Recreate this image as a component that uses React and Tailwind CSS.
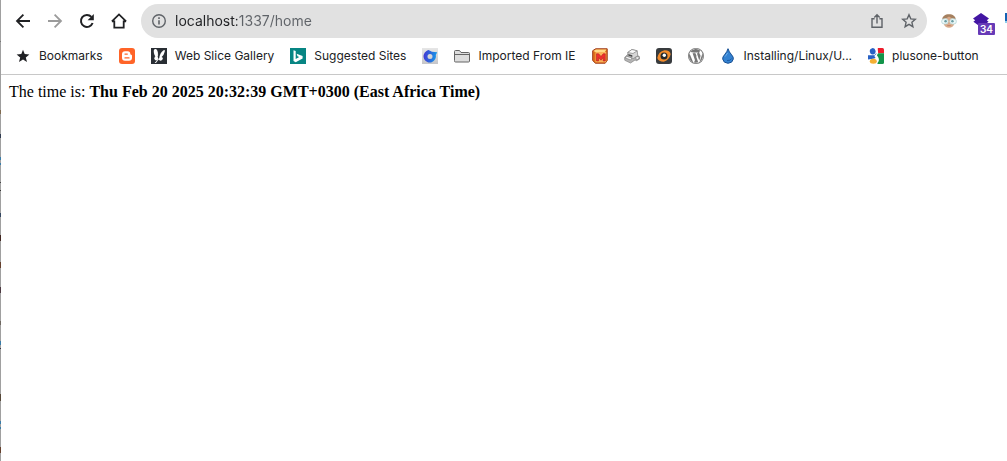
import React from "react";

const BackIcon = ({ className }) => (
  <svg viewBox="0 0 16 16" className={className} fill="none" stroke="currentColor" strokeWidth="1.8">
    <path d="M15 8H2.4M8.4 1.6 2 8l6.4 6.4" />
  </svg>
);

const ForwardIcon = ({ className }) => (
  <svg viewBox="0 0 16 16" className={className} fill="none" stroke="currentColor" strokeWidth="1.8">
    <path d="M1 8h12.6M7.6 1.6 14 8l-6.4 6.4" />
  </svg>
);

const ReloadIcon = ({ className }) => (
  <svg viewBox="0 0 16 16" className={className} fill="none" stroke="currentColor" strokeWidth="2">
    <path d="M13.6 10A6 6 0 1 1 12.4 3.9" />
    <path d="M14.8 1v6.2H8.6z" fill="currentColor" stroke="none" />
  </svg>
);

const HomeIcon = ({ className }) => (
  <svg viewBox="0 0 16 16" className={className} fill="none" stroke="currentColor" strokeWidth="1.8">
    <path d="M.9 8.3 8 1.4l7.1 6.9M.9 8.3h2.400v6.4h9.4V8.3h2.400" />
  </svg>
);

const InfoIcon = () => (
  <svg viewBox="0 0 16 16" className="size-4" fill="none" stroke="currentColor" strokeWidth="1.4">
    <circle cx="8" cy="8" r="6.3" />
    <path d="M8 7.2v4.2M8 4.3v1.6" strokeWidth="1.6" />
  </svg>
);

const ShareIcon = () => (
  <svg viewBox="0 0 16 16" className="size-4" fill="none" stroke="currentColor" strokeWidth="1.4">
    <path d="M5.6 5.7H3v8.6h10V5.7h-2.6M8 10.4V2M5.3 4.5 8 1.8l2.7 2.7" />
  </svg>
);

const StarOutlineIcon = () => (
  <svg viewBox="0 0 16 16" className="size-4" fill="none" stroke="currentColor" strokeWidth="1.4">
    <path d="m8 1.8 1.8 4.1 4.500.4-3.400 3 1 4.400L8 11.400l-3.900 2.300 1-4.400-3.400-3 4.500-.4z" />
  </svg>
);

const AvatarIcon = () => (
  <svg viewBox="0 0 16 16" className="size-4">
    <path d="M2 6h12l-.6 4.800Q12 14.800 8 14.800t-5.400-4z" fill="#d9ab8b" />
    <path d="M1.300 6.500C1.200 3.200 4.200 1.200 8 1.200s6.800 2 6.700 5.300L11 5.500H5z" fill="#a5805f" />
    <path d="M5.500 5 8 3.500 10.500 5v3.500h-5z" fill="#d9a98a" />
    <rect x=".6" y="5.800" width="6.600" height="5.200" rx="2.600" fill="#eef8f8" stroke="#b5d6d8" strokeWidth=".8" />
    <rect x="8.800" y="5.800" width="6.600" height="5.200" rx="2.600" fill="#eef8f8" stroke="#b5d6d8" strokeWidth=".8" />
    <circle cx="4.600" cy="8.300" r="1.300" fill="#6a9da3" />
    <circle cx="11.400" cy="8.300" r="1.300" fill="#6a9da3" />
    <path d="M6.300 12.600h3.400" stroke="#bd7766" strokeWidth=".8" fill="none" />
  </svg>
);

const LayersIcon = () => (
  <svg viewBox="0 0 16 16" className="size-4" fill="#4316a3">
    <path d="M8 0 16 5.500 13.800 7.200 15.600 8.800 8 14.200.4 8.800l1.800-1.600L0 5.500z" />
  </svg>
);

const BookmarkStar = () => (
  <svg viewBox="0 0 16 16" className="size-4" fill="#202124">
    <path d="m8 1.700 1.700 4.400 4.700.3-3.600 3 1.200 4.600L8 11.500 4 14l1.200-4.600-3.600-3 4.700-.3z" />
  </svg>
);

const BloggerIcon = () => (
  <svg viewBox="0 0 16 16" className="size-4">
    <rect width="16" height="16" rx="3" fill="#ff6428" />
    <path d="M6 3.200h2.700a2.600 2.600 0 0 1 2.600 2.600q0 1 .9 1 .8.100.8.900v2a3 3 0 0 1-3 3H6a3 3 0 0 1-3-3V6.200a3 3 0 0 1 3-3z" fill="#fff" />
    <path d="M6 6.100h2.300M6 9.900h4" stroke="#ff6428" strokeWidth="1.300" strokeLinecap="round" />
  </svg>
);

const WebSliceIcon = () => (
  <svg viewBox="0 0 16 16" className="size-4">
    <path d="M0 0h16v16H0z" fill="#292e34" />
    <ellipse cx="5" cy="5" rx="2" ry="4" transform="rotate(-14 5 5)" fill="#fff" />
    <ellipse cx="5.300" cy="10.200" rx="1.900" ry="2.300" fill="#fff" />
    <path d="M8.300 10Q8.800 5 12.600 2.200q1.600-.6 1.200 1.200Q13 6.800 10.600 9q1.700.3 1.200 2-1 2-3 1.600L7.600 11.600 5 15H3.600z" fill="#fff" />
    <path d="M7.400 4.500v5" stroke="#292e34" strokeWidth=".8" />
  </svg>
);

const BingIcon = () => (
  <svg viewBox="0 0 16 16" className="size-4">
    <path d="M0 0h16v16H0z" fill="#078583" />
    <path d="m3.500 2.300 2.200.8v8l3.500-2.100-1.700-.8-.9-2.500 6 2.200v2.500l-6.900 3.800-2.200-1.300z" fill="#fff" />
  </svg>
);

const SwirlIcon = () => (
  <svg viewBox="0 0 16 16" className="size-4">
    <defs>
      <linearGradient id="swirl" x1="0" y1="0.400" x2="1" y2="0.500">
        <stop offset="0" stopColor="#4338d3" />
        <stop offset="1" stopColor="#159be8" />
      </linearGradient>
      <linearGradient id="tile" x1="0" y1="0" x2="0" y2="1">
        <stop offset="0" stopColor="#e6e6e6" />
        <stop offset="1" stopColor="#c6c6c9" />
      </linearGradient>
    </defs>
    <path d="M0 0h16v16H0z" fill="url(#tile)" />
    <path d="M7 2Q5.800 2.100 4.500 3A6.200 6.200 0 1 0 13.800 7l1.400-2.800L10 3.700 7 2.300zM8 6a2.500 2.500 0 1 1 0 5 2.500 2.500 0 0 1 0-5z" fill="url(#swirl)" fillRule="evenodd" />
  </svg>
);

const FolderIcon = () => (
  <svg viewBox="0 0 16 16" className="size-4" stroke="#646464">
    <path d="M.5 12.500v-9q0-1 1-1h4l1.500 2h7.500q1 0 1 1v7.500q0 1-1 1h-13q-1 0-1-1z" fill="#ddd" />
    <path d="M1 6.500h14" />
  </svg>
);

const MBoxIcon = () => (
  <svg viewBox="0 0 16 16" className="size-4" strokeLinejoin="round">
    <path d="m.7 2.700 3-1.900h11.500v11.700l-2 2.700H3.400L.7 12.500z" fill="#df711b" stroke="#9c3817" />
    <path d="M1.300 3 4 1.400h10.500L12.800 4H3.500z" fill="#ffdb86" />
    <path d="M3.500 4h10.700v10.300H3.500z" fill="#fbb258" />
    <path d="M4.500 13V5.800h2.100L9 8.500l2.200-2.700h2.100V13h-2.100V9.600L9 12.200 6.600 9.600V13z" fill="#ee302d" stroke="#b5201f" strokeWidth=".6" />
  </svg>
);

const MachineIcon = () => (
  <svg viewBox="0 0 16 16" className="size-4" stroke="#828282" strokeWidth=".7" strokeLinejoin="round">
    <path d="m.6 9.500 3-3 8 1 3.500.8.500 2.700-3 1.700-1.600-.7L6.500 15 .8 12.300z" fill="#b5b5b5" />
    <path d="m3.700 4.500 4.200-3 5.300 1.300.6 5.200-4.500 2.500-5-2z" fill="#d7d7d7" />
    <path d="m3.700 4.500 4.200-3 5.300 1.300L9 5.500z" fill="#fafafa" />
    <path d="m4.300 6 4 1.300v1.800L4.600 7.700z" fill="#4a4a4a" stroke="none" />
    <path d="m1 9.800 2-1.500L8 10l-1.500 2zM11.500 9l3.500-.5v2l-2.500 1.600z" fill="#f3f3f3" />
  </svg>
);

const EyeIcon = () => (
  <svg viewBox="0 0 16 16" className="size-4">
    <rect width="16" height="16" rx="3" fill="#383b3e" />
    <path d="M1.300 10Q2.500 3.500 8.500 2.300q5.500-.1 6.200 4-1.800 6.300-7 7.500-5 .1-6.400-3.800z" fill="#f28b2b" />
    <circle cx="8" cy="8" r="3.500" fill="#26292c" />
    <circle cx="8.300" cy="7.300" r="1.700" fill="#fff" />
  </svg>
);

const WordPressIcon = () => (
  <svg viewBox="0 0 24 24" className="size-4" fill="#777">
    <path d="M12 0a12 12 0 1 0 0 24 12 12 0 0 0 0-24zm0 1.200a10.800 10.800 0 1 1 0 21.600 10.800 10.800 0 0 1 0-21.600z" />
    <path d="M2.300 8.100 7.900 21.600A10.400 10.400 0 0 1 2.300 8.100zM3.400 6A10.300 10.300 0 0 1 19 4.400c-1.300 0-2.100 1-2.100 2.200 0 2 1.900 2.900 1.900 5.300 0 1-.4 2.200-.9 3.800l-1 3.200-3.600-11 1.600-.2c.6-.1.500-.8-.1-.8h-5c-.6 0-.7.700 0 .8l1.500.2 1.500 4.200-2.200 6.700L6.900 7.900l1.600-.2c.6-.1.500-.8-.1-.8zM12.200 12.900l3.100 8.600a10.500 10.500 0 0 1-6.200.2zM21.200 7.200A10.300 10.300 0 0 1 17.200 21l3.200-9.100c.6-1.500.9-3.100.8-4.700z" />
  </svg>
);

const DropIcon = () => (
  <svg viewBox="0 0 16 16" className="size-4">
    <path d="M8 .7Q9 4 11.600 6.800q2.100 2.300 1.700 4.300-.7 4-5.300 4.200-4.600-.2-5.300-4.200-.3-2.100 1.800-4.300Q7.200 3.800 8 .7z" fill="#3482d1" stroke="#174f92" />
    <path d="M7.600 5Q6 7.500 5 8.600" stroke="#70b0ec" fill="none" />
    <path d="M7 12.500q3.500.5 4.600-2" stroke="#1b5ba6" fill="none" />
  </svg>
);

const GoogleIcon = () => (
  <svg viewBox="0 0 16 16" className="size-4">
    <path d="M8 0h6.500Q16 0 16 1.500V5.300H9z" fill="#ed1c2b" />
    <path d="M9 5.300h7v9.200q0 1.500-1.500 1.500H9.500z" fill="#12944a" />
    <path d="M0 7.200h5.500L8 10l-3 .8-5 .7z" fill="#2861c5" />
    <path d="M7.500 0h2.300v2Q11 5 8.800 7.400q3.200 3.200 1.600 6.300L8.300 16H7.500z" fill="#fff" />
    <ellipse cx="4.700" cy="3.300" rx="2.900" ry="3.200" transform="rotate(-12 4.700 3.300)" fill="#2861c5" />
    <ellipse cx="5.300" cy="13.300" rx="3.500" ry="2.500" fill="#f4af32" />
    <path d="M3.800 8.700Q7 8 8.200 5.500" stroke="#2861c5" strokeWidth=".8" fill="none" />
  </svg>
);

const bookmarks = [
  { Icon: BookmarkStar, label: "Bookmarks" },
  { Icon: BloggerIcon, name: "Blogger" },
  { Icon: WebSliceIcon, label: "Web Slice Gallery" },
  { Icon: BingIcon, label: "Suggested Sites" },
  { Icon: SwirlIcon, name: "Search" },
  { Icon: FolderIcon, label: "Imported From IE" },
  { Icon: MBoxIcon, name: "Mail" },
  { Icon: MachineIcon, name: "Tools" },
  { Icon: EyeIcon, name: "Viewer" },
  { Icon: WordPressIcon, name: "WordPress" },
  { Icon: DropIcon, label: "Installing/Linux/U..." },
  { Icon: GoogleIcon, label: "plusone-button" },
];

const edgeMarks = [
  [41, 1, "#777"], [110, 4, "#806b50"], [134, 4, "#303b50"], [157, 3, "#397ca8"],
  [163, 2, "#397ca8"], [182, 1, "#444"], [190, 1, "#333"], [213, 4, "#33455f"],
  [235, 6, "#40251f"], [262, 6, "#65402d"], [287, 6, "#4c3941"], [321, 4, "#6e6860"],
  [341, 4, "#397ca8"], [348, 1, "#334"], [394, 7, "#554737"], [421, 3, "#397ca8"],
  [427, 2, "#397ca8"], [447, 6, "#65402d"],
];

function IconButton({ label, className = "", children }) {
  return (
    <button type="button" aria-label={label} className={`flex h-8 w-8 shrink-0 items-center justify-center ${className}`}>
      {children}
    </button>
  );
}

export default function App() {
  return (
    <div className="flex min-h-screen overflow-hidden bg-white font-['Inter','Liberation_Sans',sans-serif]">
      <div className="w-px shrink-0 bg-[#a0a0a0]" aria-hidden="true">
        <svg className="block w-px" height="461">
          {edgeMarks.map(([y, h, fill]) => (
            <rect key={y} y={y} width="1" height={h} fill={fill} />
          ))}
        </svg>
      </div>
      <div className="min-w-0 flex-1">
        <header className="border-b border-[#c8c8c8]">
          <div className="flex items-center py-1 pl-1.5 text-[#202124]">
            <IconButton label="Back"><BackIcon className="size-4" /></IconButton>
            <IconButton label="Forward"><ForwardIcon className="size-4 text-[#9b9b9b]" /></IconButton>
            <IconButton label="Reload"><ReloadIcon className="size-4" /></IconButton>
            <IconButton label="Home"><HomeIcon className="size-4" /></IconButton>
            <div className="ml-1.5 flex h-[34px] min-w-0 flex-1 items-center rounded-full bg-[#e1e1e1] px-0.5 text-[#5f6368]">
              <IconButton label="Site information"><InfoIcon /></IconButton>
              <input
                type="text"
                aria-label="Address"
                defaultValue="localhost:1337/home"
                className="min-w-0 flex-1 bg-linear-to-r from-[#202124] from-[62px] to-[#5f6368] to-[62px] bg-clip-text text-sm text-transparent caret-black outline-none"
              />
              <IconButton label="Share"><ShareIcon /></IconButton>
              <IconButton label="Bookmark this page"><StarOutlineIcon /></IconButton>
            </div>
            <div className="flex w-20 shrink-0 overflow-hidden pl-1.5">
              <IconButton label="Profile extension"><AvatarIcon /></IconButton>
              <IconButton label="Layers extension, 34" className="relative">
                <LayersIcon />
                <span className="absolute right-0.5 bottom-0.5 rounded-[1px] bg-[#673ab7] px-0.5 text-[10px] leading-3 font-semibold text-white">
                  34
                </span>
              </IconButton>
              <IconButton label="Extension">
                <svg viewBox="0 0 16 16" className="size-4"><path d="M0 0h16v8H0z" fill="#1463b5" /><path d="M0 8h16v2H0z" fill="#8fd0ef" /></svg>
              </IconButton>
            </div>
          </div>
          <nav aria-label="Bookmarks" className="flex items-center gap-4 overflow-hidden pt-1.5 pb-2.5 pl-3.5">
            {bookmarks.map(({ Icon, label, name }) => (
              <a key={label || name} href="#" aria-label={name} className="flex h-4 shrink-0 items-center gap-2 text-xs whitespace-nowrap text-[#202124]">
                <Icon />
                {label && <span>{label}</span>}
              </a>
            ))}
          </nav>
        </header>
        <main className="p-2 font-['Liberation_Serif',serif] text-base leading-[18px] text-black">
          The time is: <b>Thu Feb 20 2025 20:32:39 GMT+0300 (East Africa Time)</b>
        </main>
      </div>
    </div>
  );
}
